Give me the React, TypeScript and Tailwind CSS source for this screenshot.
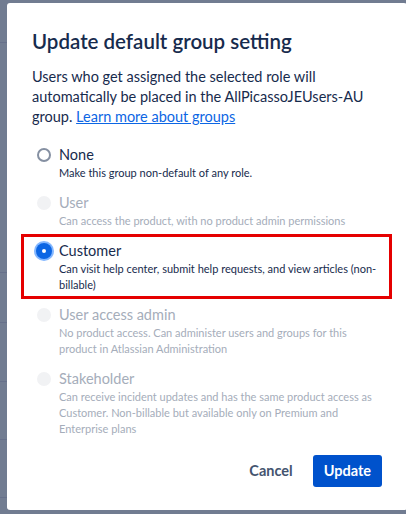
import React from 'react';

const FONT = 'Lato, "Liberation Sans", sans-serif';

type Role = { name: string; desc: string; disabled?: boolean; checked?: boolean; marked?: boolean };

const ROLES: Role[] = [
  { name: 'None', desc: 'Make this group non-default of any role.' },
  { name: 'User', desc: 'Can access the product, with no product admin permissions', disabled: true },
  {
    name: 'Customer',
    desc: 'Can visit help center, submit help requests, and view articles (non-billable)',
    checked: true,
    marked: true,
  },
  {
    name: 'User access admin',
    desc: 'No product access. Can administer users and groups for this product in Atlassian Administration',
    disabled: true,
  },
  {
    name: 'Stakeholder',
    desc: 'Can receive incident updates and has the same product access as Customer. Non-billable but available only on Premium and Enterprise plans',
    disabled: true,
  },
];

function Radio({ checked, disabled }: { checked?: boolean; disabled?: boolean }) {
  if (checked) {
    return (
      <span className="flex h-[16px] w-[16px] items-center justify-center rounded-full bg-[#0c66e4] ring-2 ring-[#85b8ff]">
        <span className="h-[4px] w-[4px] rounded-full bg-white" />
      </span>
    );
  }
  if (disabled) return <span className="h-[14px] w-[14px] rounded-full bg-[#f1f2f4]" />;
  return <span className="h-[14px] w-[14px] rounded-full border-2 border-[#8590a2] bg-white" />;
}

function RoleRow({ role }: { role: Role }) {
  const main = role.disabled ? 'text-[#a5adba]' : 'text-[#172b4d]';
  return (
    <div className="relative flex">
      <div className="flex h-5 w-6 shrink-0 items-center justify-center">
        <Radio checked={role.checked} disabled={role.disabled} />
      </div>
      <div className="pl-[3px]">
        <div className={`text-[14.5px] leading-5 ${main}`}>{role.name}</div>
        <div className={`text-[11px] leading-4 ${main}`}>{role.desc}</div>
      </div>
      {role.marked && (
        <div className="pointer-events-none absolute -top-[7px] -bottom-[6px] -left-[11px] right-[-10px] border-[3px] border-[#e50000]" />
      )}
    </div>
  );
}

export default function App() {
  return (
    <div className="relative h-[514px] w-[406px] overflow-hidden bg-[#717c91]" style={{ fontFamily: FONT }}>
      {/* page behind the blanket */}
      <div className="flex flex-col">
        <div className="h-[43px] border-b border-[#66708a]" />
        <div className="h-[230px] border-b border-[#66708a]" />
        <div className="h-[50px] border-b border-[#66708a]" />
        <div className="h-[59px] border-b border-[#66708a]" />
        <div className="h-[58px] border-b border-[#66708a]" />
        <div className="h-[58px] border-b border-[#66708a]" />
      </div>

      {/* dialog */}
      <div className="absolute left-[7px] top-[3px] flex h-[507px] w-[400px] flex-col rounded-[3px] bg-white px-[25px]">
        <h1 className="pt-[26px] text-[20.5px] font-semibold leading-6 text-[#172b4d]">Update default group setting</h1>
        <p className="mt-[14px] text-[14.5px] leading-5 text-[#172b4d]">
          Users who get assigned the selected role will automatically be placed in the AllPicassoJEUsers-AU group.{' '}
          <a className="text-[#0c66e4] underline">Learn more about groups</a>
        </p>
        <div className="mt-[18px] flex flex-col gap-3">
          {ROLES.map((r) => (
            <RoleRow key={r.name} role={r} />
          ))}
        </div>
        <div className="mt-[18px] flex justify-end gap-2">
          <button className="h-8 rounded-[3px] px-3 text-[14.5px] font-bold text-[#44546f]">Cancel</button>
          <button className="h-8 rounded-[3px] bg-[#0052cc] px-[11px] text-[14.5px] font-bold text-white">Update</button>
        </div>
      </div>
    </div>
  );
}
